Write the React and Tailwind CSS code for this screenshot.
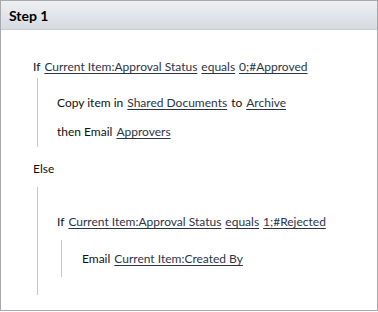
const Link = ({ children }) => (
  <span className="underline decoration-1 underline-offset-2 text-[#2e3448]">{children}</span>
);

export default function App() {
  return (
    <div className="w-[378px] h-[312px] bg-white">
      <div className="w-[378px] h-[311px] border border-[#a7a9ad] bg-white text-[#111] font-['Segoe_UI','Lato',sans-serif] text-[12px]">
        <div className="h-[29px] bg-gradient-to-b from-[#eef0f3] to-[#d6dae1] border-b border-[#c9ccd2] flex items-center pl-[8px]">
          <span className="font-bold text-[14px] text-black">Step 1</span>
        </div>

        <div className="pl-[32px] pt-[28px]">
          <div className="h-[18px] flex items-center gap-[4px]">
            <span>If</span>
            <Link>Current Item:Approval Status</Link>
            <Link>equals</Link>
            <Link>0;#Approved</Link>
          </div>

          <div className="mt-[2px] ml-[4px] border-l border-[#c4c6cc] h-[69px] pl-[19px] pt-[16px]">
            <div className="h-[18px] flex items-center gap-[4px]">
              <span>Copy item in</span>
              <Link>Shared Documents</Link>
              <span>to</span>
              <Link>Archive</Link>
            </div>
            <div className="mt-[11px] h-[18px] flex items-center gap-[4px]">
              <span>then Email</span>
              <Link>Approvers</Link>
            </div>
          </div>

          <div className="mt-[13px] h-[18px] flex items-center">
            <span>Else</span>
          </div>

          <div className="mt-[9px] ml-[4px] border-l border-[#c4c6cc] h-[108px] pl-[19px] pt-[26px]">
            <div className="h-[18px] flex items-center gap-[4px]">
              <span>If</span>
              <Link>Current Item:Approval Status</Link>
              <Link>equals</Link>
              <Link>1;#Rejected</Link>
            </div>
            <div className="mt-[9px] ml-[4px] border-l border-[#c4c6cc] h-[37px] pl-[20px] pt-[10px]">
              <div className="h-[18px] flex items-center gap-[4px]">
                <span>Email</span>
                <Link>Current Item:Created By</Link>
              </div>
            </div>
          </div>
        </div>
      </div>
    </div>
  );
}
